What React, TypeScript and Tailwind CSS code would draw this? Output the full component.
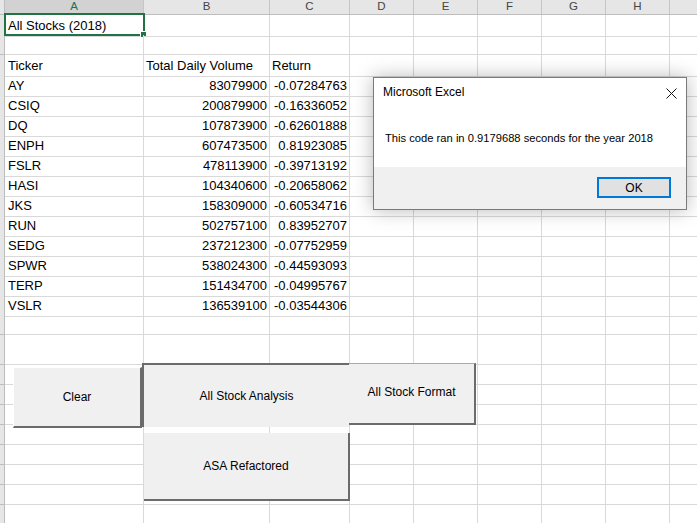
type Cell = { text: string; right?: boolean }

const COLS = ['A', 'B', 'C', 'D', 'E', 'F', 'G', 'H', '']

const stocks: [string, string, string][] = [
  ['AY', '83079900', '-0.07284763'],
  ['CSIQ', '200879900', '-0.16336052'],
  ['DQ', '107873900', '-0.62601888'],
  ['ENPH', '607473500', '0.81923085'],
  ['FSLR', '478113900', '-0.39713192'],
  ['HASI', '104340600', '-0.20658062'],
  ['JKS', '158309000', '-0.60534716'],
  ['RUN', '502757100', '0.83952707'],
  ['SEDG', '237212300', '-0.07752959'],
  ['SPWR', '538024300', '-0.44593093'],
  ['TERP', '151434700', '-0.04995767'],
  ['VSLR', '136539100', '-0.03544306'],
]

const rows: { cells: Cell[]; tall?: boolean }[] = [
  { cells: [{ text: 'All Stocks (2018)' }] },
  { cells: [] },
  { cells: [{ text: 'Ticker' }, { text: 'Total Daily Volume' }, { text: 'Return' }] },
  ...stocks.map(([t, v, r]) => ({
    cells: [{ text: t }, { text: v, right: true }, { text: r, right: true }],
  })),
  { cells: [] },
  { cells: [], tall: true },
  ...Array.from({ length: 8 }, () => ({ cells: [] as Cell[] })),
]

const gridCols = 'grid grid-cols-[5px_139px_126px_80px_64px_64px_64px_64px_64px_28px]'

function SheetButton({ label, className }: { label: string; className: string }) {
  return (
    <div
      className={`absolute flex items-center justify-center bg-[#f0f0f0] text-[12px] text-black ${className}`}
    >
      {label}
    </div>
  )
}

export default function App() {
  return (
    <div className="relative w-[697px] h-[523px] overflow-hidden bg-white font-['Liberation_Sans',Arial,sans-serif]">
      {/* column headers */}
      <div className={`${gridCols} h-[15px] border-b border-[#bdbdbd] bg-[#e6e6e6]`}>
        <div className="border-r border-[#bdbdbd]" />
        {COLS.map((c, i) => (
          <div
            key={i}
            className={`flex justify-center border-r border-[#c6c6c6] text-[11.5px] leading-[12px] ${
              c === 'A' ? 'bg-[#d2d2d2] text-[#217346]' : 'text-[#444444]'
            }`}
          >
            {c}
          </div>
        ))}
      </div>

      {/* cells */}
      {rows.map((row, r) => (
        <div
          key={r}
          className={`${gridCols} ${row.tall ? 'h-[30px]' : 'h-[20px]'} text-[13px] text-black`}
        >
          <div className="bg-[#e6e6e6] border-r border-b border-[#bdbdbd]" />
          {Array.from({ length: 9 }, (_, c) => {
            const cell = row.cells[c]
            return (
              <div
                key={c}
                className={`relative whitespace-nowrap border-r border-b border-[#d9d9d9] leading-[21px] ${
                  cell?.right ? 'text-right pr-[2px]' : c === 0 ? 'pl-[3px]' : 'pl-[2px]'
                }`}
              >
                {cell?.text}
                {r === 0 && c === 0 && (
                  <div className="absolute -left-[1px] -top-[2px] w-[141px] h-[23px] border-2 border-[#217346]">
                    <div className="absolute -right-[4px] -bottom-[4px] w-[7px] h-[7px] bg-[#217346] border border-white" />
                  </div>
                )}
              </div>
            )
          })}
        </div>
      ))}

      {/* form buttons on the sheet */}
      <SheetButton
        label="Clear"
        className="left-[13px] top-[367px] w-[129px] h-[61px] border-t border-l border-t-white border-l-white border-r-2 border-b-2 border-r-[#6b6b6b] border-b-[#6b6b6b]"
      />
      <SheetButton
        label="All Stock Analysis"
        className="left-[142px] top-[363px] w-[207px] h-[64px] border-t-2 border-l-2 border-[#6b6b6b]"
      />
      <SheetButton
        label="All Stock Format"
        className="left-[349px] top-[363px] w-[127px] h-[62px] pb-[3px] border-t border-t-[#a8a8a8] border-r-2 border-b-2 border-r-[#6b6b6b] border-b-[#6b6b6b]"
      />
      <SheetButton
        label="ASA Refactored"
        className="left-[144px] top-[433px] w-[206px] h-[68px] border-r-2 border-b-2 border-[#6b6b6b]"
      />

      {/* message box */}
      <div className="absolute left-[373px] top-[77px] w-[314px] h-[133px] flex flex-col border border-[#7a7a7a] bg-white shadow-[0_0_18px_rgba(0,0,0,0.28)]">
        <div className="h-[89px]">
          <div className="flex items-start justify-between pl-[9px] pr-[9px] pt-[7px] text-[12px] leading-[14px] text-black">
            <span>Microsoft Excel</span>
            <svg width="11" height="11" viewBox="0 0 11 11" className="mt-[3px]">
              <path d="M0.5 0.5 L10.5 10.5 M10.5 0.5 L0.5 10.5" stroke="#111" strokeWidth="1" />
            </svg>
          </div>
          <p className="mt-[33px] pl-[11px] text-[11.2px] leading-[13px] text-black">
            This code ran in 0.9179688 seconds for the year 2018
          </p>
        </div>
        <div className="flex flex-1 justify-end bg-[#f0f0f0] pr-[15px] pt-[10px]">
          <div className="flex w-[74px] h-[21px] items-center justify-center border-2 border-[#0078d7] bg-[#e1e1e1] text-[12px] text-black">
            OK
          </div>
        </div>
      </div>
    </div>
  )
}
